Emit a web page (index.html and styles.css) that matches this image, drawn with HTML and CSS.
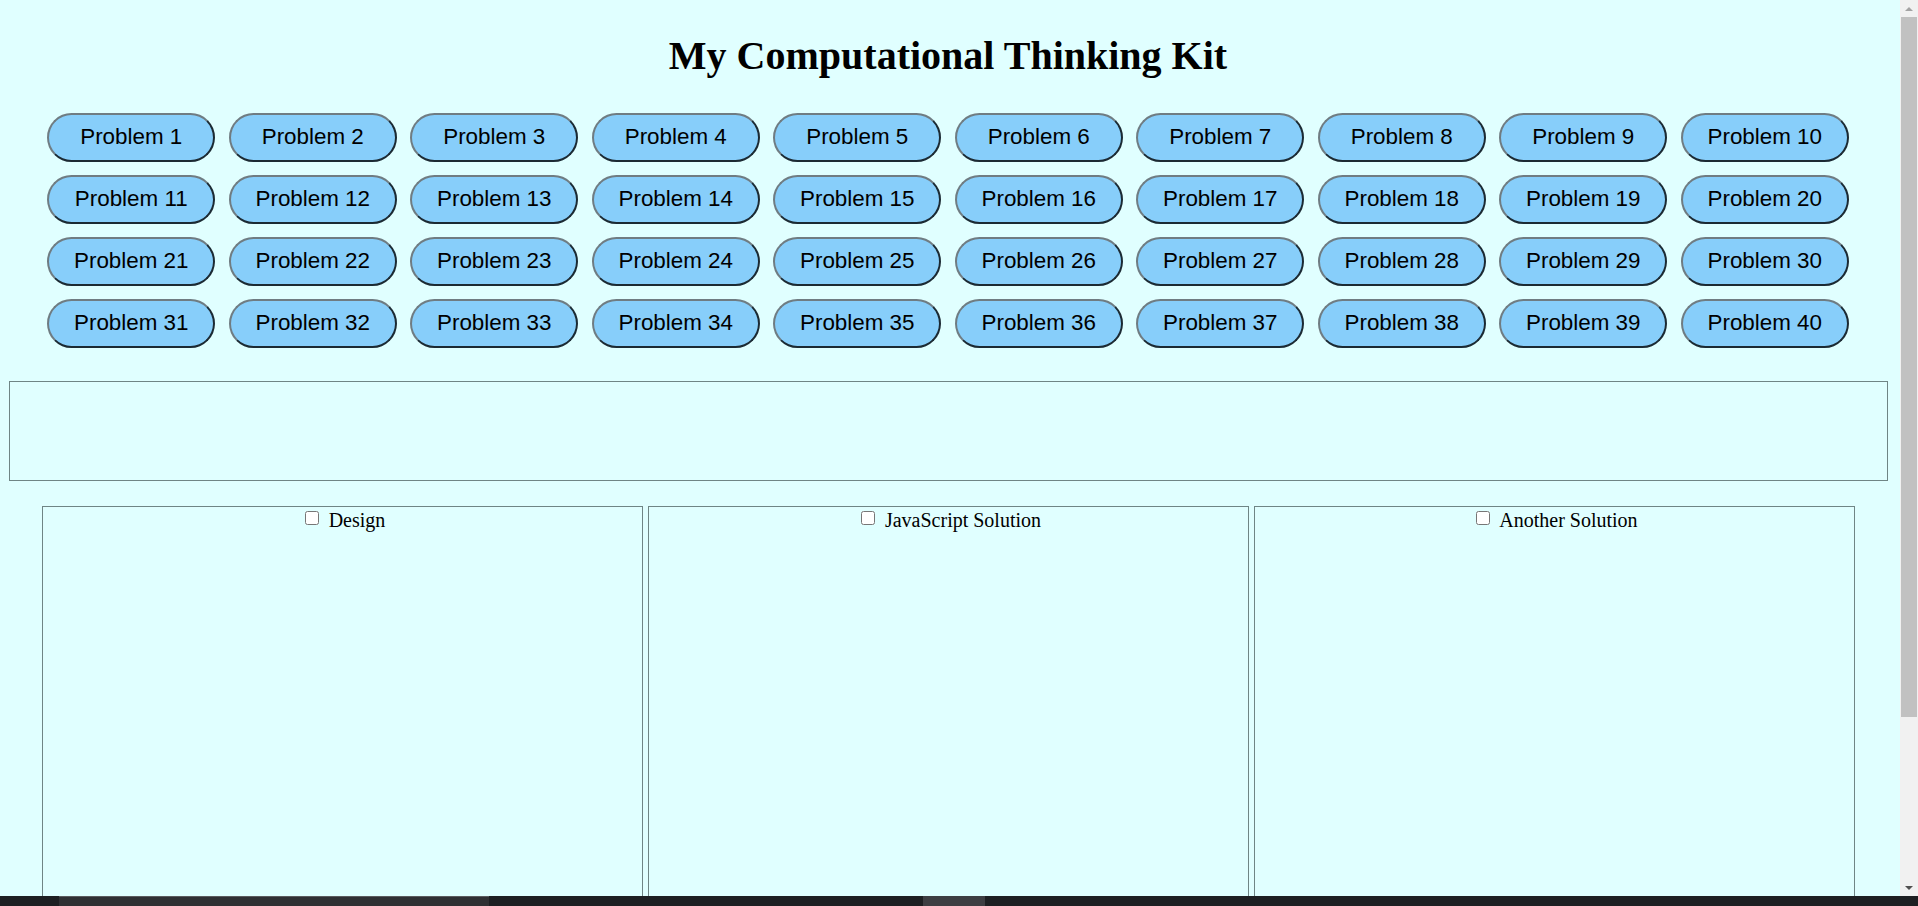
FILE: index.html
```html
<!DOCTYPE html>
<html lang="en">
<head>
<meta charset="utf-8">
<title>My Computational Thinking Kit</title>
<link rel="stylesheet" href="styles.css">
</head>
<body>
<div class="page">
  <h1 class="title">My Computational Thinking Kit</h1>
  <div class="problems">
    <button class="prob">Problem 1</button>
    <button class="prob">Problem 2</button>
    <button class="prob">Problem 3</button>
    <button class="prob">Problem 4</button>
    <button class="prob">Problem 5</button>
    <button class="prob">Problem 6</button>
    <button class="prob">Problem 7</button>
    <button class="prob">Problem 8</button>
    <button class="prob">Problem 9</button>
    <button class="prob">Problem 10</button>
    <button class="prob">Problem 11</button>
    <button class="prob">Problem 12</button>
    <button class="prob">Problem 13</button>
    <button class="prob">Problem 14</button>
    <button class="prob">Problem 15</button>
    <button class="prob">Problem 16</button>
    <button class="prob">Problem 17</button>
    <button class="prob">Problem 18</button>
    <button class="prob">Problem 19</button>
    <button class="prob">Problem 20</button>
    <button class="prob">Problem 21</button>
    <button class="prob">Problem 22</button>
    <button class="prob">Problem 23</button>
    <button class="prob">Problem 24</button>
    <button class="prob">Problem 25</button>
    <button class="prob">Problem 26</button>
    <button class="prob">Problem 27</button>
    <button class="prob">Problem 28</button>
    <button class="prob">Problem 29</button>
    <button class="prob">Problem 30</button>
    <button class="prob">Problem 31</button>
    <button class="prob">Problem 32</button>
    <button class="prob">Problem 33</button>
    <button class="prob">Problem 34</button>
    <button class="prob">Problem 35</button>
    <button class="prob">Problem 36</button>
    <button class="prob">Problem 37</button>
    <button class="prob">Problem 38</button>
    <button class="prob">Problem 39</button>
    <button class="prob">Problem 40</button>
  </div>
  <div class="statement"></div>
  <div class="panels">
    <div class="panel"><label class="panel-label"><input type="checkbox" class="chk"> Design</label></div>
    <div class="panel"><label class="panel-label"><input type="checkbox" class="chk"> JavaScript Solution</label></div>
    <div class="panel"><label class="panel-label"><input type="checkbox" class="chk"> Another Solution</label></div>
  </div>
</div>
<div class="scrollbar">
  <div class="sb-up"><span class="tri-up"></span></div>
  <div class="sb-thumb"></div>
  <div class="sb-rest"></div>
  <div class="sb-down"><span class="tri-down"></span></div>
</div>
<div class="taskbar">
  <div class="tb-search"></div>
  <div class="tb-app"></div>
</div>
</body>
</html>
```

FILE: styles.css
```css
html, body {
  margin: 0;
  padding: 0;
  height: 100%;
  overflow: hidden;
}

body {
  background: #e0ffff;
  font-family: "Liberation Serif", "Times New Roman", serif;
  color: #000;
}

.page {
  width: 1880px;
  margin-left: 8px;
  display: flex;
  flex-direction: column;
}

.title {
  margin: 33px 0 0;
  font-family: "Liberation Serif", "Times New Roman", serif;
  font-size: 40px;
  font-weight: bold;
  line-height: 46px;
  text-align: center;
}

.problems {
  margin-top: 34px;
  display: grid;
  grid-template-columns: repeat(10, 168px);
  grid-auto-rows: 49px;
  column-gap: 13.5px;
  row-gap: 13px;
  justify-content: center;
}

.prob {
  margin: 0;
  padding: 0 0 2px;
  background: #87cefa;
  border: 2px solid;
  border-color: #6f7c82 #1b2a33 #1b2a33 #6f7c82;
  border-radius: 25px;
  font-family: "Liberation Sans", Arial, sans-serif;
  font-size: 22.4px;
  color: #000;
  cursor: pointer;
}

.statement {
  margin: 33px 0 0 1px;
  height: 98px;
  border: 1px solid #6f8585;
}

.panels {
  margin-top: 25px;
  display: flex;
  justify-content: center;
  gap: 5px;
}

.panel {
  width: 599px;
  height: 500px;
  border: 1px solid #6f8585;
  padding-top: 2px;
  text-align: center;
}

.panel-label {
  font-size: 20px;
  line-height: 23px;
}

.chk {
  width: 14px;
  height: 14px;
  margin: 0 5px 0 6px;
  vertical-align: 2px;
}

/* emulated window chrome */
.scrollbar {
  position: fixed;
  top: 0;
  right: 0;
  width: 18px;
  height: 896px;
  background: #f1f1f1;
  display: flex;
  flex-direction: column;
}

.sb-up, .sb-down {
  height: 17px;
  display: flex;
  align-items: center;
  justify-content: center;
}

.tri-up {
  width: 0;
  height: 0;
  border-left: 4px solid transparent;
  border-right: 4px solid transparent;
  border-bottom: 4px solid #a3a3a3;
}

.tri-down {
  width: 0;
  height: 0;
  border-left: 4px solid transparent;
  border-right: 4px solid transparent;
  border-top: 4px solid #505050;
}

.sb-thumb {
  height: 700px;
  margin: 0 1px 0 1px;
  background: #c1c1c1;
}

.sb-rest {
  flex: 1;
}

.taskbar {
  position: fixed;
  left: 0;
  bottom: 0;
  width: 100%;
  height: 10px;
  background: #1d1f22;
}

.tb-search {
  position: absolute;
  left: 59px;
  top: 0;
  width: 430px;
  height: 10px;
  background: #2f3033;
  border-top: 1px solid #5a5b5e;
  box-sizing: border-box;
}

.tb-app {
  position: absolute;
  left: 923px;
  top: 0;
  width: 62px;
  height: 10px;
  background: #3d3e42;
}
```
